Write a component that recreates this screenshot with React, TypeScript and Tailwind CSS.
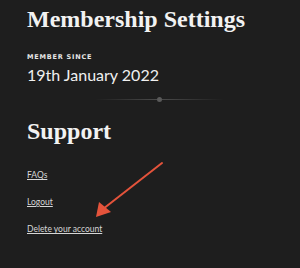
import React from "react";

export default function App() {
  return (
    <div className="relative w-[300px] h-[268px] bg-[#1e1e1e] overflow-hidden">
      <div className="flex flex-col px-[27px] pt-[7px]">
        <h1 className="text-[24px] leading-[24px] font-bold text-[#f2f2f2] [font-family:'Liberation_Serif',serif]">
          Membership Settings
        </h1>
        <div className="mt-[22px] text-[6.5px] leading-[8px] font-bold uppercase tracking-[0.12em] text-[#e6e6e6] [font-family:'DejaVu_Sans',sans-serif]">
          Member since
        </div>
        <div className="mt-[5px] text-[16px] leading-[18px] text-[#f0f0f0] [font-family:'Lato',sans-serif]">
          19th January 2022
        </div>
        <div className="mt-[12px] ml-[68px] flex items-center h-[6px]">
          <div className="w-[62px] h-px bg-gradient-to-r from-transparent to-[#4a4a4a]" />
          <div className="w-[5px] h-[5px] rounded-full bg-[#5a5a5a]" />
          <div className="w-[62px] h-px bg-gradient-to-l from-transparent to-[#4a4a4a]" />
        </div>
        <h2 className="mt-[17px] text-[24px] leading-[24px] font-bold text-[#f2f2f2] [font-family:'Liberation_Serif',serif]">
          Support
        </h2>
        <div className="mt-[27px] flex flex-col gap-[17px] text-[8.5px] leading-[10px] text-[#d6d6d6] [font-family:'Lato',sans-serif]">
          <a className="underline underline-offset-[1px] self-start">FAQs</a>
          <a className="underline underline-offset-[1px] self-start">Logout</a>
          <a className="underline underline-offset-[1px] self-start">Delete your account</a>
        </div>
      </div>
      <svg className="absolute left-0 top-0" width="300" height="268" viewBox="0 0 300 268">
        <line x1="162" y1="163" x2="103" y2="209" stroke="#e4533b" strokeWidth="2" strokeLinecap="round" />
        <polygon points="96,217 99,202 111,212" fill="#e4533b" />
      </svg>
    </div>
  );
}
